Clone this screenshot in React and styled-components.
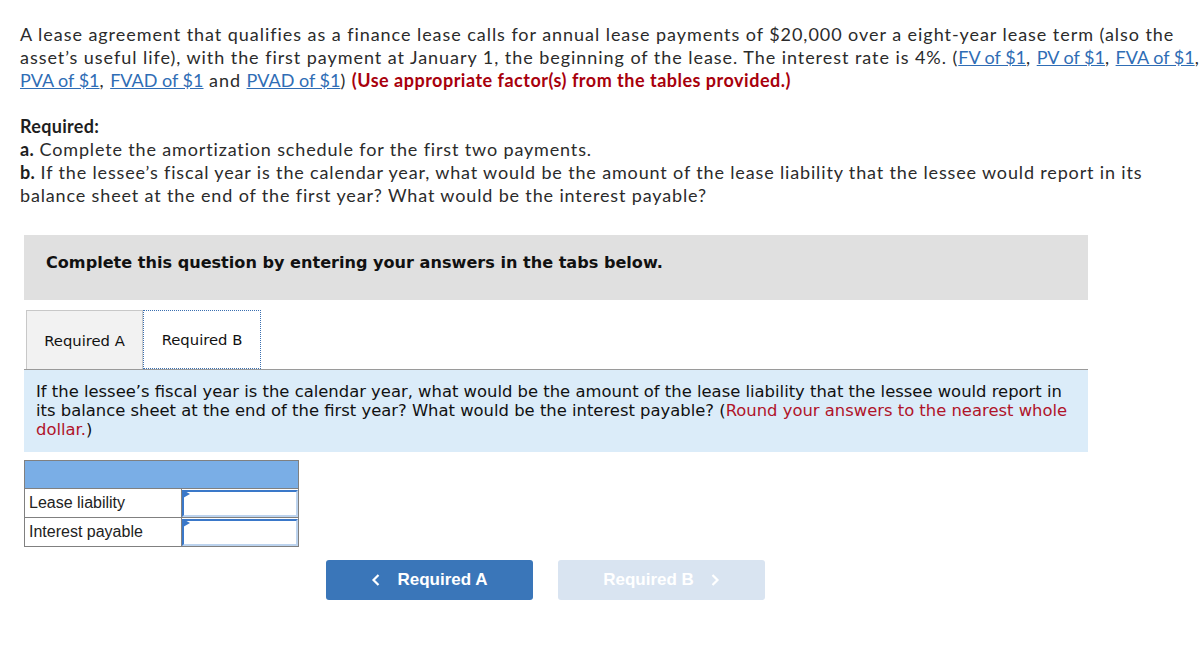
import React from 'react';
import styled, { createGlobalStyle } from 'styled-components';

const Global = createGlobalStyle`
  body {
    margin: 0;
    background: #fff;
  }
`;

const Page = styled.div`
  padding: 23px 0 40px 20px;
  width: 1201px;
  box-sizing: border-box;
`;

const Intro = styled.p`
  margin: 0;
  font-family: Lato, "Liberation Sans", sans-serif;
  font-size: 18px;
  letter-spacing: 0.95px;
  font-variant-ligatures: none;
  line-height: 23px;
  color: #2b2b2b;
`;

const TableLink = styled.a`
  color: #2f6db5;
  text-decoration: underline;
  white-space: nowrap;
  letter-spacing: 0;
`;

const Warn = styled.strong`
  color: #a8000c;
  font-weight: 700;
  letter-spacing: 0.5px;
`;

const Required = styled.div`
  margin-top: 23px;
  margin-right: 4px;
  font-family: Lato, "Liberation Sans", sans-serif;
  font-size: 18px;
  letter-spacing: 0.85px;
  font-variant-ligatures: none;
  line-height: 23px;
  color: #2b2b2b;

  b {
    font-weight: 700;
    color: #1e1e1e;
    letter-spacing: 0.3px;
  }
`;

const Work = styled.div`
  margin: 28px 0 0 4px;
  width: 1064px;
  font-family: "DejaVu Sans", Verdana, sans-serif;
`;

const Banner = styled.div`
  background: #e0e0e0;
  height: 65px;
  padding: 18px 0 0 22px;
  box-sizing: border-box;
  font-size: 16.1px;
  font-weight: 700;
  color: #111;
`;

const Tabs = styled.div`
  display: flex;
  margin-top: 10px;
  padding-left: 2px;
  border-bottom: 1px solid #9a9a9a;
`;

const Tab = styled.div`
  height: 59px;
  width: ${p => (p.$active ? '118px' : '117px')};
  box-sizing: border-box;
  display: flex;
  align-items: center;
  justify-content: center;
  font-size: 14.8px;
  color: #111;
  background: ${p => (p.$active ? '#fff' : '#f2f2f2')};
  border: ${p => (p.$active ? '1px dotted #3a6fb0' : '1px solid #c8c8c8')};
  border-bottom: ${p => (p.$active ? '1px dotted #3a6fb0' : 'none')};
`;

const Prompt = styled.div`
  background: #dbecf9;
  padding: 12px 20px 13px 12px;
  font-size: 16.4px;
  line-height: 19px;
  color: #111;

  span {
    color: #b0142a;
  }
`;

const AnswerTable = styled.table`
  margin-top: 8px;
  border-collapse: collapse;
  font-family: "Liberation Sans", Arial, sans-serif;
  font-size: 16px;
  color: #222;
`;

const HeadCell = styled.th`
  background: #7aaee6;
  height: 27px;
  border: 1px solid #808080;
  padding: 0;
`;

const Label = styled.td`
  width: 152px;
  height: 28px;
  padding: 0 0 0 4px;
  border: 1px solid #808080;
`;

const InputCell = styled.td`
  width: 116px;
  padding: 0;
  border: 1px solid #808080;
  position: relative;

  &::before {
    content: '';
    position: absolute;
    left: 1px;
    top: 1px;
    border-left: 7px solid #3a78c9;
    border-top: 4px solid transparent;
    border-bottom: 4px solid transparent;
  }
`;

const Field = styled.div`
  height: 27px;
  border: 2px solid #3a78c9;
  border-color: #3a78c9 #bcd3ee #bcd3ee #3a78c9;
  box-sizing: border-box;
`;

const Nav = styled.div`
  display: flex;
  gap: 25px;
  margin: 13px 0 0 302px;
`;

const NavButton = styled.div`
  width: 207px;
  height: 40px;
  border-radius: 3px;
  display: flex;
  align-items: center;
  justify-content: center;
  gap: 16px;
  font-family: "Liberation Sans", Arial, sans-serif;
  font-size: 17px;
  font-weight: 700;
  color: #fff;
  background: ${p => (p.$disabled ? '#d9e4f1' : '#3a76b9')};
`;

const Chevron = ({ dir }) => (
  <svg width="10" height="14" viewBox="0 0 10 14">
    <path
      d={dir === 'left' ? 'M7.5 2 L2.5 7 L7.5 12' : 'M2.5 2 L7.5 7 L2.5 12'}
      fill="none"
      stroke="#fff"
      strokeWidth="2.2"
    />
  </svg>
);

export default function App() {
  return (
    <Page>
      <Global />
      <Intro>
        A lease agreement that qualifies as a finance lease calls for annual lease payments of $20,000 over a
        eight-year lease term (also the asset’s useful life), with the first payment at January 1, the beginning
        of the lease. The interest rate is 4%. (<TableLink>FV of $1</TableLink>, <TableLink>PV of $1</TableLink>,{' '}
        <TableLink>FVA of $1</TableLink>, <TableLink>PVA of $1</TableLink>, <TableLink>FVAD of $1</TableLink> and{' '}
        <TableLink>PVAD of $1</TableLink>) <Warn>(Use appropriate factor(s) from the tables provided.)</Warn>
      </Intro>

      <Required>
        <b>Required:</b>
        <br />
        <b>a.</b> Complete the amortization schedule for the first two payments.
        <br />
        <b>b.</b> If the lessee’s fiscal year is the calendar year, what would be the amount of the lease liability
        that the lessee would report in its balance sheet at the end of the first year? What would be the interest
        payable?
      </Required>

      <Work>
        <Banner>Complete this question by entering your answers in the tabs below.</Banner>
        <Tabs>
          <Tab>Required A</Tab>
          <Tab $active>Required B</Tab>
        </Tabs>
        <Prompt>
          If the lessee’s fiscal year is the calendar year, what would be the amount of the lease liability that the
          lessee would report in its balance sheet at the end of the first year? What would be the interest payable?
          (<span>Round your answers to the nearest whole dollar.</span>)
        </Prompt>

        <AnswerTable>
          <thead>
            <tr>
              <HeadCell colSpan={2} />
            </tr>
          </thead>
          <tbody>
            <tr>
              <Label>Lease liability</Label>
              <InputCell>
                <Field />
              </InputCell>
            </tr>
            <tr>
              <Label>Interest payable</Label>
              <InputCell>
                <Field />
              </InputCell>
            </tr>
          </tbody>
        </AnswerTable>

        <Nav>
          <NavButton>
            <Chevron dir="left" />
            Required A
          </NavButton>
          <NavButton $disabled>
            Required B
            <Chevron dir="right" />
          </NavButton>
        </Nav>
      </Work>
    </Page>
  );
}
